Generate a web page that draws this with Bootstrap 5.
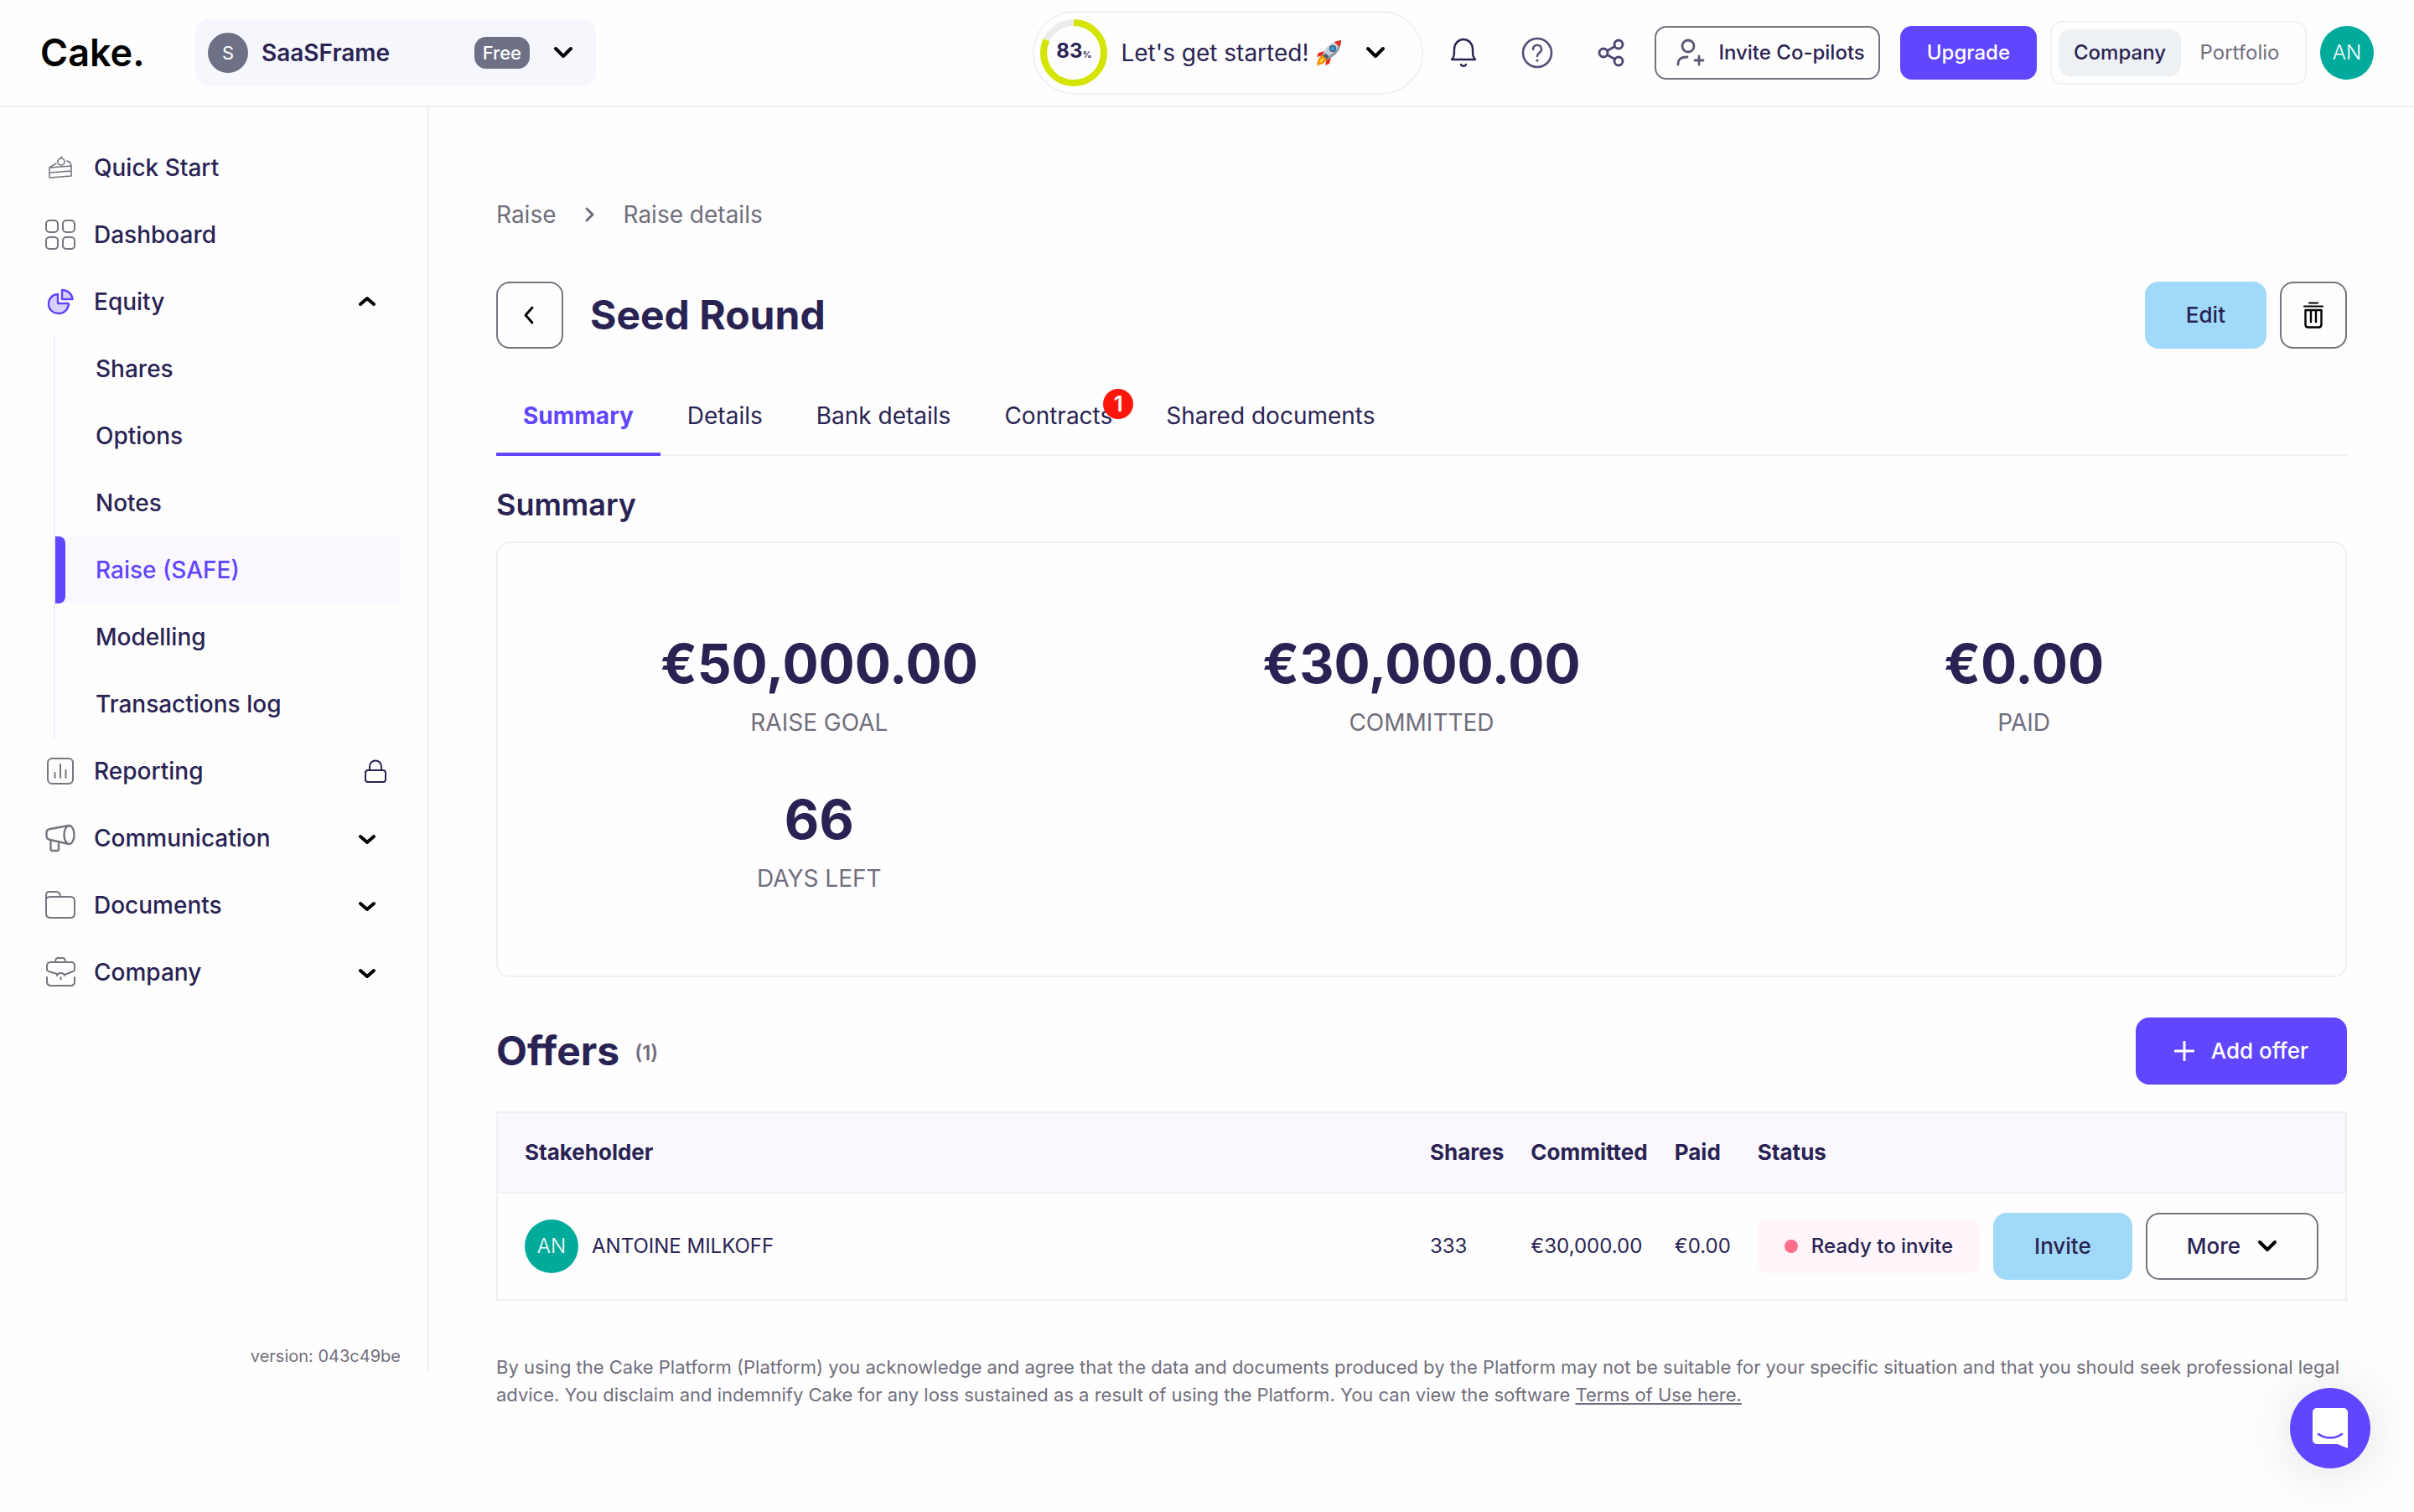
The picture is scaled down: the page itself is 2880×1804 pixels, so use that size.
<!DOCTYPE html>
<html lang="en">
<head>
<meta charset="utf-8">
<meta name="viewport" content="width=device-width, initial-scale=1">
<title>Cake - Seed Round</title>
<link href="https://cdn.jsdelivr.net/npm/bootstrap@5.3.0/dist/css/bootstrap.min.css" rel="stylesheet">
<style>
:root { --ink:#292353; --muted:#706e7c; --line:#f0eff2; --violet:#6146ff; --sky:#a1daf8; --teal:#00ab9b; }
body { font-family:Inter,"Liberation Sans",sans-serif; font-size:28px; line-height:40px; color:var(--ink); background:#fefefe; fill:none; stroke:currentColor; stroke-linecap:round; stroke-linejoin:round; }
a { color:inherit; text-decoration:none; }
svg { display:block; flex:none; }
.btn { --bs-btn-line-height:40px; --bs-btn-font-size:26px; --bs-btn-border-width:2px; --bs-btn-border-radius:16px; --bs-btn-color:var(--ink); --bs-btn-padding-y:0; font-weight:500; display:inline-flex; align-items:center; justify-content:center; white-space:nowrap; gap:20px; }
.btn-tall { height:80px; --bs-btn-padding-x:47px; }
.btn-top { height:64px; --bs-btn-font-size:24px; --bs-btn-border-radius:14px; --bs-btn-padding-x:30px; gap:16px; }
.btn-violet { --bs-btn-color:#fff; --bs-btn-bg:var(--violet); --bs-btn-border-color:var(--violet); --bs-btn-hover-bg:#4f35e8; --bs-btn-hover-color:#fff; }
.btn-add { --bs-btn-padding-x:44px; }
.btn-sky { --bs-btn-bg:var(--sky); --bs-btn-border-color:var(--sky); --bs-btn-hover-bg:#8dcff2; }
.btn-line { --bs-btn-border-color:#75747f; --bs-btn-hover-border-color:var(--ink); }
.btn-square { width:80px; --bs-btn-padding-x:0; --bs-btn-color:#000; }
.topbar { height:128px; border-bottom:2px solid var(--line); padding:0 48px; }
.brand { font-size:45px; font-weight:600; color:#000; width:185px; line-height:48px; }
.company-pick { width:478px; height:80px; background:#f6f7fc; border:0; border-radius:16px; padding:0 27px 0 15px; color:var(--ink); font-weight:600; }
.dot-s { width:48px; height:48px; background:#6e7186; color:#fff; font-size:22px; font-weight:400; margin-right:16px; }
.plan { background:#6e7186; color:#fff; font-size:22px; font-weight:500; line-height:38px; border-radius:14px; padding:0 10px; margin-right:28px; }
.onboard { height:100px; width:466px; border:2px solid #f2f1f5; border-radius:50px; background:none; padding:0 43px 0 7px; color:var(--ink); }
.ring { width:80px; height:80px; margin-right:16px; }
.ring span { font-size:24px; font-weight:700; line-height:24px; }
.ring small { font-size:11px; font-weight:600; }
.tool { width:88px; height:64px; border:0; background:none; padding:0; color:var(--ink); }
.switcher { border:2px solid #f2f2f5; border-radius:14px; height:76px; padding:8px; }
.switcher button { border:0; background:none; height:56px; font-size:24px; color:var(--muted); border-radius:14px; padding:0 18px; min-width:140px; }
.switcher button.on { background:#eef1f3; color:var(--ink); font-weight:500; }
.face { width:64px; height:64px; background:var(--teal); color:#fff; font-size:24px; font-weight:300; flex:none; }
.side { width:512px; flex:none; border-right:2px solid var(--line); padding:32px 32px 0 54px; min-height:calc(100vh - 294px); }
.side a { height:80px; font-weight:500; }
.side-ico { width:36px; margin-right:22px; color:#77757f; }
.side-end { margin-right:30px; color:#000; }
.subnav { margin-left:10px; border-left:2px solid #efebfc; }
.subnav a { padding-left:48px; }
.subnav a.on { color:var(--violet); background:#faf7ff; padding-left:0; }
.subnav a.on::before { content:""; width:12px; height:80px; margin-right:36px; background:var(--violet); border-radius:0 8px 8px 0; }
.ver { font-size:20px; color:var(--muted); line-height:40px; }
.page { padding:108px 80px 64px; min-width:0; }
.crumbs { color:var(--muted); gap:32px; margin-bottom:60px; }
.big-title { font-size:48px; font-weight:700; line-height:64px; margin:0; }
.title-row .big-title { padding-left:32px; }
.tabs { border-bottom:2px solid var(--line); height:96px; margin-top:32px; }
.tabs a { padding:0 32px; height:96px; }
.tabs a.on { color:var(--violet); font-weight:700; border-bottom:4px solid var(--violet); padding-top:4px; }
.count { position:absolute; width:36px; height:36px; left:calc(100% - 43px); top:16px; background:#ff160a; color:#fff; font-size:26px; font-weight:600; }
.sub-title { font-size:36px; font-weight:600; line-height:44px; margin:36px 0 22px; }
.panel { border:2px solid var(--line); border-radius:16px; padding:104px 24px 96px; }
.figures { row-gap:56px; }
.figure-num { font-size:64px; font-weight:700; line-height:80px; margin-bottom:10px; }
.figure-cap { color:var(--muted); }
.offers-head { margin:48px 0 32px; }
.offers-n { font-size:24px; font-weight:600; color:var(--muted); padding:6px 0 0 18px; }
.offers { border:2px solid var(--line); margin:0; --bs-table-bg:transparent; --bs-table-color:var(--ink); font-size:24px; border-collapse:separate; border-spacing:0; white-space:nowrap; }
.offers > :not(caption) > * > * { padding:0 16px; border:0; vertical-align:middle; }
.offers > :not(caption) > * > :first-child { padding-left:32px; }
.offers > :not(caption) > * > :last-child { padding-left:0; padding-right:32px; }
.offers > thead > tr > th { height:96px; background:#faf8fc; border-bottom:2px solid #f3f1f5; font-weight:700; font-size:26px; }
.offers > tbody > tr > td { height:126px; }
.status { height:64px; background:#fff5fa; border-radius:12px; padding:0 32px; font-weight:500; gap:16px; }
.status i { width:16px; height:16px; background:#ff6e8c; }
.legal { font-size:22px; line-height:33px; color:var(--muted); margin:63px 0 0; }
.chat { position:fixed; right:52px; bottom:52px; width:96px; height:96px; border:0; background:var(--violet); color:#fff; box-shadow:0 4px 64px rgba(0,0,0,.12); }
</style>
<script src="https://cdn.jsdelivr.net/npm/bootstrap@5.3.0/dist/js/bootstrap.bundle.min.js"></script>
</head>
<body>
<header class="topbar d-flex align-items-center">
  <a href="#" class="brand">Cake.</a>
  <button type="button" class="company-pick d-flex align-items-center" aria-label="Choose company">
    <span class="dot-s rounded-circle d-flex align-items-center justify-content-center">S</span>
    <span>SaaSFrame</span>
    <span class="plan ms-auto">Free</span>
    <svg width="24" height="16" viewBox="0 0 24 16" stroke="#000" stroke-width="4"><path d="M3 3l9 9 9-9"/></svg>
  </button>
  <button type="button" class="onboard d-flex align-items-center ms-auto">
    <span class="ring position-relative d-flex align-items-center justify-content-center">
      <svg class="position-absolute" width="80" height="80" viewBox="0 0 80 80" stroke-width="8" stroke-linecap="butt"><circle cx="40" cy="40" r="36" stroke="#ececef"/><circle cx="40" cy="40" r="36" stroke="#d3e500" pathLength="100" stroke-dasharray="82 18" transform="rotate(-90 40 40)"/></svg>
      <span>83<small>%</small></span>
    </span>
    <span>Let's get started!</span>
    <svg class="ms-2" width="32" height="32" viewBox="0 0 32 32" stroke="none"><path d="M10 14L3 16l-2 5 8-2zM18 22l-2 7-5 2 2-8z" fill="#e0301e"/><path d="M8 19c-4 1-6 5-7 12 6-1 10-3 12-7z" fill="#ff8a00"/><path d="M8 22c-2 1-3 3-4 6 3-1 5-2 6-4z" fill="#ffdf3a"/><path d="M8 19C11 9 18 3 30 1c0 12-7 19-17 23z" fill="#c3ced8"/><path d="M12 22c8-4 14-10 18-21 0 12-7 19-17 23z" fill="#8797a8"/><path d="M22 3c3-1 5-2 8-2 0 3-1 6-2 8z" fill="#e0301e"/><circle cx="20" cy="11" r="4" fill="#3f5364"/><circle cx="20" cy="11" r="2.600" fill="#2fa3e8"/><path d="M8 19l5 5 2-4-3-3z" fill="#4b5a68"/></svg>
    <svg class="ms-auto" width="24" height="16" viewBox="0 0 24 16" stroke="#000" stroke-width="4"><path d="M3 3l9 9 9-9"/></svg>
  </button>
  <button type="button" class="tool d-flex align-items-center justify-content-center ms-1" aria-label="Notifications"><svg width="32" height="36" viewBox="0 0 32 36" stroke-width="2.400"><path d="M2 26h28c-3-3-3-6-3-12C27 7 22 2 16 2S5 7 5 14c0 6 0 9-3 12zM13 32c1 2.500 5 2.500 6 0"/></svg></button>
  <button type="button" class="tool d-flex align-items-center justify-content-center" aria-label="Help"><svg width="38" height="38" viewBox="0 0 38 38" stroke="#55507a" stroke-width="2.600"><circle cx="19" cy="19" r="17"/><path d="M14 15c0-7 10-7 10 0 0 4-5 4-5 8"/><path d="M19 28v.2" stroke-width="3"/></svg></button>
  <button type="button" class="tool d-flex align-items-center justify-content-center" aria-label="Share"><svg width="32" height="34" viewBox="0 0 32 34" stroke="#4b4672" stroke-width="2.800"><circle cx="25" cy="7" r="5"/><circle cx="7" cy="17" r="5"/><circle cx="25" cy="27" r="5"/><path d="M11.500 14.500l9-5M11.500 19.500l9 5"/></svg></button>
  <button type="button" class="btn btn-top btn-line ms-2 ps-4 pe-3"><svg width="34" height="34" viewBox="0 0 34 34" stroke="#5b5775" stroke-width="2.800"><circle cx="14" cy="9" r="7"/><path d="M2 31c0-7 4-9 11-9M27 21v10M22 26h10"/></svg>Invite Co-pilots</button>
  <button type="button" class="btn btn-top btn-violet ms-4">Upgrade</button>
  <div class="switcher d-flex align-items-center ms-3" role="group" aria-label="View">
    <button type="button" class="on">Company</button><button type="button">Portfolio</button>
  </div>
  <a href="#" class="face rounded-circle d-flex align-items-center justify-content-center ms-3">AN</a>
</header>

<div class="d-flex align-items-start">
  <nav class="side d-flex flex-column" aria-label="Main">
    <a href="#" class="d-flex align-items-center"><span class="side-ico"><svg class="mx-auto" width="30" height="28" viewBox="0 0 30 28" stroke-width="1.600"><path d="M2 14v12l26-2V12zM2 20l26-2M2 14l8-5M28 12c0-3-2-5-5-6"/><circle cx="16" cy="7" r="4"/><path d="M15 3l2-2"/></svg></span>Quick Start</a>
    <a href="#" class="d-flex align-items-center"><span class="side-ico"><svg width="36" height="36" viewBox="0 0 36 36" stroke-width="2"><rect x="1" y="1" width="14" height="14" rx="4"/><rect x="21" y="1" width="14" height="14" rx="4"/><rect x="1" y="21" width="14" height="14" rx="4"/><rect x="21" y="21" width="14" height="14" rx="4"/></svg></span>Dashboard</a>
    <a href="#" class="d-flex align-items-center"><span class="side-ico"><svg class="mx-auto" width="32" height="32" viewBox="0 0 32 32" stroke="#6146ff" stroke-width="2.400" fill="#d9d0fb"><path d="M13 7v11h12c1 0 1 1 1 1-1 7-6 11-12 11C7 30 2 25 2 19 2 12 7 7 13 7zM18 2c7 0 12 5 12.500 11H18z"/></svg></span>Equity<svg class="side-end ms-auto" width="20" height="14" viewBox="0 0 20 14" stroke-width="4"><path d="M2 10l8-7 8 7"/></svg></a>
    <div class="subnav d-flex flex-column">
      <a href="#" class="d-flex align-items-center">Shares</a>
      <a href="#" class="d-flex align-items-center">Options</a>
      <a href="#" class="d-flex align-items-center">Notes</a>
      <a href="#" class="d-flex align-items-center on">Raise (SAFE)</a>
      <a href="#" class="d-flex align-items-center">Modelling</a>
      <a href="#" class="d-flex align-items-center">Transactions log</a>
    </div>
    <a href="#" class="d-flex align-items-center"><span class="side-ico"><svg class="mx-auto" width="32" height="32" viewBox="0 0 32 32" stroke-width="2"><rect x="1" y="1" width="30" height="30" rx="5"/><path d="M9.500 18v6M16 8v16M22.500 15v9"/></svg></span>Reporting<svg class="ms-auto me-3" width="28" height="28" viewBox="0 0 28 28" stroke-width="2"><rect x="2" y="13" width="24" height="14" rx="3"/><path d="M7 13V8.500a7 7 0 0 1 14 0V13"/></svg></a>
    <a href="#" class="d-flex align-items-center"><span class="side-ico"><svg width="36" height="34" viewBox="0 0 36 34" stroke-width="2.400"><ellipse cx="28.500" cy="13" rx="6" ry="11"/><path d="M28 2L6 6C3 6.500 1.500 8 1.500 10v4c0 3 1.500 4.500 4.500 5l22 5M6.500 19.500V30c0 1.500 1 2 2 2H14c1 0 2-.5 2-2v-8"/></svg></span>Communication<svg class="side-end ms-auto" width="20" height="14" viewBox="0 0 20 14" stroke-width="4"><path d="M2 5l8 7 8-7"/></svg></a>
    <a href="#" class="d-flex align-items-center"><span class="side-ico"><svg width="36" height="34" viewBox="0 0 36 34" stroke-width="2"><path d="M1 27V5c0-2.500 1.500-4 4-4h8c3 0 5 2 5 6H30c3 0 5 2 5 5v15c0 3-2 5-5 5H6c-3 0-5-2-5-5zM1 9c1-1 2-2 5-2h12"/></svg></span>Documents<svg class="side-end ms-auto" width="20" height="14" viewBox="0 0 20 14" stroke-width="4"><path d="M2 5l8 7 8-7"/></svg></a>
    <a href="#" class="d-flex align-items-center"><span class="side-ico"><svg width="36" height="36" viewBox="0 0 36 36" stroke-width="2"><path d="M12 6c0-3 1-5 3-5h6c2 0 3 2 3 5M14 20L4 17c-1.500-.5-2-1.500-2-2v-5c0-2.500 2-4 4-4h25c2 0 4 1.500 4 4v5c0 1-.5 1.500-2 2l-10 4M14 22c1-4 8-4 9 0M18.500 24v2.500M2 24v5c0 3 2 5 5 5h23c3 0 5-2 5-5v-5"/></svg></span>Company<svg class="side-end ms-auto" width="20" height="14" viewBox="0 0 20 14" stroke-width="4"><path d="M2 5l8 7 8-7"/></svg></a>
    <div class="ver text-end mt-auto">version: 043c49be</div>
  </nav>

  <main class="page flex-grow-1">
    <nav class="crumbs d-flex align-items-center" aria-label="Breadcrumb">
      <a href="#">Raise</a>
      <svg width="16" height="20" viewBox="0 0 16 20" stroke-width="3"><path d="M4 3l7 7-7 7"/></svg>
      <span>Raise details</span>
    </nav>
    <div class="title-row d-flex align-items-center">
      <button type="button" class="btn btn-tall btn-line btn-square" aria-label="Back"><svg width="16" height="22" viewBox="0 0 16 22" stroke-width="2.800"><path d="M11 2l-8 9 8 9"/></svg></button>
      <h1 class="big-title me-auto">Seed Round</h1>
      <button type="button" class="btn btn-tall btn-sky">Edit</button>
      <button type="button" class="btn btn-tall btn-line btn-square ms-3" aria-label="Delete"><svg width="26" height="32" viewBox="0 0 26 32" stroke-width="2.400"><path d="M8 1.500h10M2 5.500h22" stroke-width="2.200"/><path d="M3.500 10h19v17c0 2-1 3.500-3 3.500h-13c-2 0-3-1.500-3-3.500zM10 11v13M16 11v13"/></svg></button>
    </div>
    <nav class="tabs d-flex" aria-label="Raise sections">
      <a href="#" class="on d-flex align-items-center">Summary</a>
      <a href="#" class="d-flex align-items-center">Details</a>
      <a href="#" class="d-flex align-items-center">Bank details</a>
      <a href="#" class="d-flex align-items-center position-relative">Contracts<span class="count rounded-circle d-flex align-items-center justify-content-center">1</span></a>
      <a href="#" class="d-flex align-items-center">Shared documents</a>
    </nav>

    <h2 class="sub-title">Summary</h2>
    <section class="panel">
      <div class="row g-0 text-center figures">
        <div class="col-4"><div class="figure-num">€50,000.00</div><div class="figure-cap">RAISE GOAL</div></div>
        <div class="col-4"><div class="figure-num">€30,000.00</div><div class="figure-cap">COMMITTED</div></div>
        <div class="col-4"><div class="figure-num">€0.00</div><div class="figure-cap">PAID</div></div>
        <div class="col-4"><div class="figure-num">66</div><div class="figure-cap">DAYS LEFT</div></div>
      </div>
    </section>

    <div class="offers-head d-flex align-items-center">
      <h2 class="big-title">Offers</h2><span class="offers-n">(1)</span>
      <button type="button" class="btn btn-tall btn-violet btn-add ms-auto"><svg width="24" height="24" viewBox="0 0 24 24" stroke-width="3"><path d="M12 1v22M1 12h22"/></svg>Add offer</button>
    </div>
    <table class="table offers">
      <thead><tr><th scope="col" class="w-100">Stakeholder</th><th scope="col">Shares</th><th scope="col">Committed</th><th scope="col">Paid</th><th scope="col">Status</th><th aria-label="Actions"></th></tr></thead>
      <tbody><tr>
        <td><div class="d-flex align-items-center gap-3"><span class="face rounded-circle d-flex align-items-center justify-content-center">AN</span>ANTOINE MILKOFF</div></td>
        <td>333</td><td>€30,000.00</td><td>€0.00</td>
        <td><span class="status d-inline-flex align-items-center"><i class="rounded-circle"></i>Ready to invite</span></td>
        <td><div class="d-flex gap-3"><button type="button" class="btn btn-tall btn-sky">Invite</button><button type="button" class="btn btn-tall btn-line">More<svg width="24" height="16" viewBox="0 0 24 16" stroke="#000" stroke-width="4"><path d="M3 3l9 9 9-9"/></svg></button></div></td>
      </tr></tbody>
    </table>
    <p class="legal">By using the Cake Platform (Platform) you acknowledge and agree that the data and documents produced by the Platform may not be suitable for your specific situation and that you should seek professional legal advice. You disclaim and indemnify Cake for any loss sustained as a result of using the Platform. You can view the software <a href="#" class="text-decoration-underline">Terms of Use here.</a></p>
  </main>
</div>
<button type="button" class="chat rounded-circle d-flex align-items-center justify-content-center" aria-label="Open chat"><svg width="42" height="48" viewBox="0 0 42 48"><path d="M5 0h32a5 5 0 0 1 5 5v43l-12-5H5a5 5 0 0 1-5-5V5a5 5 0 0 1 5-5z" fill="#fff" stroke="none"/><path d="M7 31c8 6 20 6 28 0" stroke="#6146ff" stroke-width="2.600"/></svg></button>
</body>
</html>
